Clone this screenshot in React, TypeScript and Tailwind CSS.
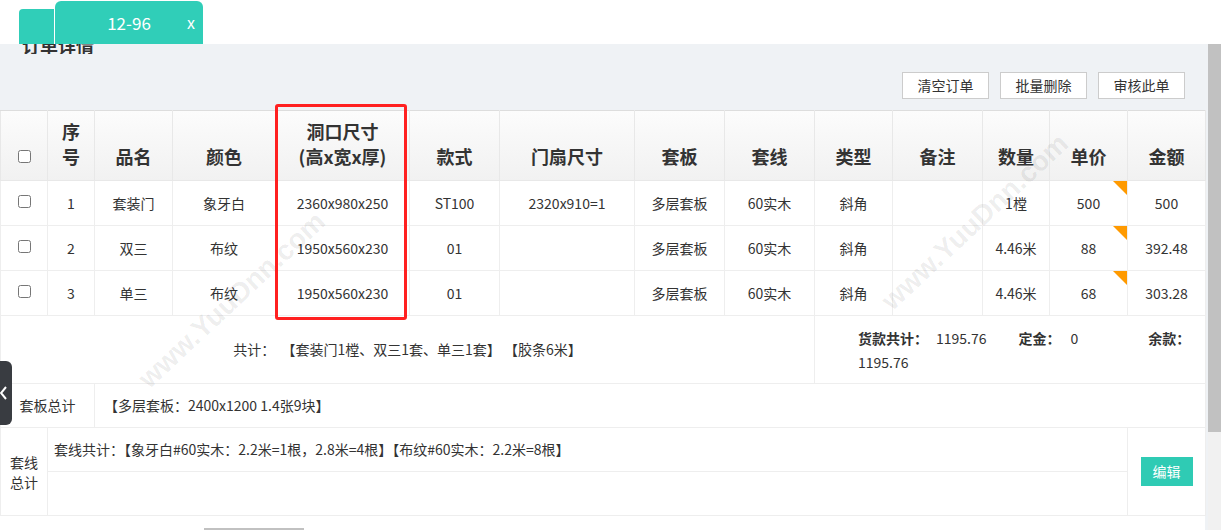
import React from 'react'

const cols = [47, 47, 78, 103, 134, 90, 135, 90, 90, 78, 90, 67, 78, 78]

const rows = [
  { no: '1', name: '套装门', color: '象牙白', hole: '2360x980x250', style: 'ST100', leaf: '2320x910=1', board: '多层套板', line: '60实木', kind: '斜角', note: '', qty: '1樘', price: '500', amount: '500' },
  { no: '2', name: '双三', color: '布纹', hole: '1950x560x230', style: '01', leaf: '', board: '多层套板', line: '60实木', kind: '斜角', note: '', qty: '4.46米', price: '88', amount: '392.48' },
  { no: '3', name: '单三', color: '布纹', hole: '1950x560x230', style: '01', leaf: '', board: '多层套板', line: '60实木', kind: '斜角', note: '', qty: '4.46米', price: '68', amount: '303.28' },
]

const th = 'border border-[#e8e8e8] border-t-[#dddddd] align-bottom pb-[11px] px-0 text-center font-bold text-[18px] leading-[25px] text-[#333]'
const td = 'border border-[#eeeeee] text-center align-middle text-[14px] text-[#333] px-0'

function Watermark({ x, y }: { x: number; y: number }) {
  return (
    <div
      className="absolute pointer-events-none -translate-x-1/2 -translate-y-1/2 -rotate-[43deg] whitespace-nowrap text-[28px] font-bold text-black/[0.08] font-['Liberation_Sans',sans-serif]"
      style={{ left: x, top: y }}
    >
      www.YuuDnn.com
    </div>
  )
}

export default function App() {
  return (
    <div className="relative w-[1223px] h-[530px] overflow-hidden bg-white font-['Noto_Sans_CJK_SC',sans-serif] text-[#333]">
      {/* tabs */}
      <div className="relative z-10 h-[44px] bg-white flex items-end pl-[19px]">
        <div className="w-[35px] h-[35px] bg-[#30ceb8] rounded-tl-[4px]" />
        <div className="relative ml-[1px] w-[148px] h-[43px] bg-[#30ceb8] rounded-t-[6px] flex items-center justify-center text-white text-[17px]">
          12-96
          <span className="absolute right-[8px] top-[9px] text-[16px]">x</span>
        </div>
      </div>

      <div className="flex h-[486px]">
        <div className="w-[1208px] bg-[#eff2f5] flex flex-col">
          <div className="h-[66px] flex flex-col">
            <div className="h-[10px] overflow-hidden pl-[22px]">
              <div className="-mt-[10px] text-[18px] leading-[22px] font-bold text-[#333]">订单详情</div>
            </div>
            <div className="flex justify-end gap-[11px] pr-[23px] mt-[18px]">
              {['清空订单', '批量删除', '审核此单'].map((t) => (
                <button key={t} className="w-[87px] h-[27px] bg-white border border-[#cccccc] text-[14px] text-[#333] leading-[25px]">
                  {t}
                </button>
              ))}
            </div>
          </div>

          <div className="w-[1205px] bg-white">
            <table className="table-fixed border-collapse w-[1205px]">
              <colgroup>
                {cols.map((w, i) => (
                  <col key={i} style={{ width: w }} />
                ))}
              </colgroup>
              <thead>
                <tr className="h-[70px] bg-linear-to-b from-[#fcfcfc] to-[#f1f1f1]">
                  <th className={th}>
                    <div className="flex h-[25px] items-center justify-center">
                      <input type="checkbox" className="w-[13px] h-[13px]" />
                    </div>
                  </th>
                  <th className={th}>序<br />号</th>
                  <th className={th}>品名</th>
                  <th className={th}>颜色</th>
                  <th className={th}>洞口尺寸<br />(高x宽x厚)</th>
                  <th className={th}>款式</th>
                  <th className={th}>门扇尺寸</th>
                  <th className={th}>套板</th>
                  <th className={th}>套线</th>
                  <th className={th}>类型</th>
                  <th className={th}>备注</th>
                  <th className={th}>数量</th>
                  <th className={th}>单价</th>
                  <th className={th}>金额</th>
                </tr>
              </thead>
              <tbody>
                {rows.map((r) => (
                  <tr key={r.no} className="h-[45px]">
                    <td className={td}>
                      <div className="flex justify-center -mt-[3px]">
                        <input type="checkbox" className="w-[13px] h-[13px]" />
                      </div>
                    </td>
                    <td className={td}>{r.no}</td>
                    <td className={td}>{r.name}</td>
                    <td className={td}>{r.color}</td>
                    <td className={`${td} text-[13.5px]`}>{r.hole}</td>
                    <td className={td}>{r.style}</td>
                    <td className={`${td} text-[13.5px]`}>{r.leaf}</td>
                    <td className={td}>{r.board}</td>
                    <td className={td}>{r.line}</td>
                    <td className={td}>{r.kind}</td>
                    <td className={td}>{r.note}</td>
                    <td className={td}>{r.qty}</td>
                    <td className={`${td} relative`}>
                      {r.price}
                      <span className="absolute right-0 top-0 w-0 h-0 border-l-[14px] border-l-transparent border-t-[14px] border-t-[#ff9a00]" />
                    </td>
                    <td className={td}>{r.amount}</td>
                  </tr>
                ))}
                <tr className="h-[68px]">
                  <td className={td} colSpan={9}>
                    共计：&nbsp;&nbsp;【套装门1樘、双三1套、单三1套】 【胶条6米】
                  </td>
                  <td className={`${td} !text-left pl-[43px] leading-[24px]`} colSpan={5}>
                    <div className="flex whitespace-nowrap">
                      <b>货款共计：</b>
                      <span className="ml-[8px] mr-[32px]">1195.76</span>
                      <b>定金：</b>
                      <span className="ml-[10px] mr-[70px]">0</span>
                      <b>余款：</b>
                    </div>
                    <div>1195.76</div>
                  </td>
                </tr>
                <tr className="h-[44px]">
                  <td className={td} colSpan={2}>套板总计</td>
                  <td className={`${td} !text-left pl-[9px]`} colSpan={12}>
                    【多层套板：2400x1200 1.4张9块】
                  </td>
                </tr>
                <tr className="h-[44px]">
                  <td className={`${td} leading-[20px]`} rowSpan={2}>套线<br />总计</td>
                  <td className={`${td} !text-left pl-[6px]`} colSpan={12}>
                    套线共计：【象牙白#60实木：2.2米=1根，2.8米=4根】【布纹#60实木：2.2米=8根】
                  </td>
                  <td className={td} rowSpan={2}>
                    <div className="flex justify-center">
                      <button className="w-[52px] h-[29px] bg-[#2fcbb4] text-white text-[14px]">编辑</button>
                    </div>
                  </td>
                </tr>
                <tr className="h-[44px]">
                  <td className={td} colSpan={12}></td>
                </tr>
              </tbody>
            </table>
          </div>
          <div className="w-[1205px] flex-1 bg-white flex items-end pl-[204px]">
            <div className="w-[100px] h-[2px] bg-[#c1c1c1]" />
          </div>
        </div>
        <div className="w-[13px] bg-[#f1f1f1]">
          <div className="h-[388px] bg-[#c1c1c1]" />
        </div>
        <div className="w-[2px] bg-white" />
      </div>

      {/* overlays */}
      <Watermark x={232} y={300} />
      <Watermark x={975} y={222} />

      <div className="absolute left-[275px] top-[104px] w-[132px] h-[216px] border-[3px] border-[#ff2020] rounded-[3px] pointer-events-none" />

      <div className="absolute left-0 top-[361px] w-[12px] h-[64px] bg-[#393c41] rounded-r-[6px]">
        <svg width="12" height="64" viewBox="0 0 12 64" className="block">
          <polyline points="6,26 1,32 6,38" fill="none" stroke="white" strokeWidth="2" />
        </svg>
      </div>
    </div>
  )
}
